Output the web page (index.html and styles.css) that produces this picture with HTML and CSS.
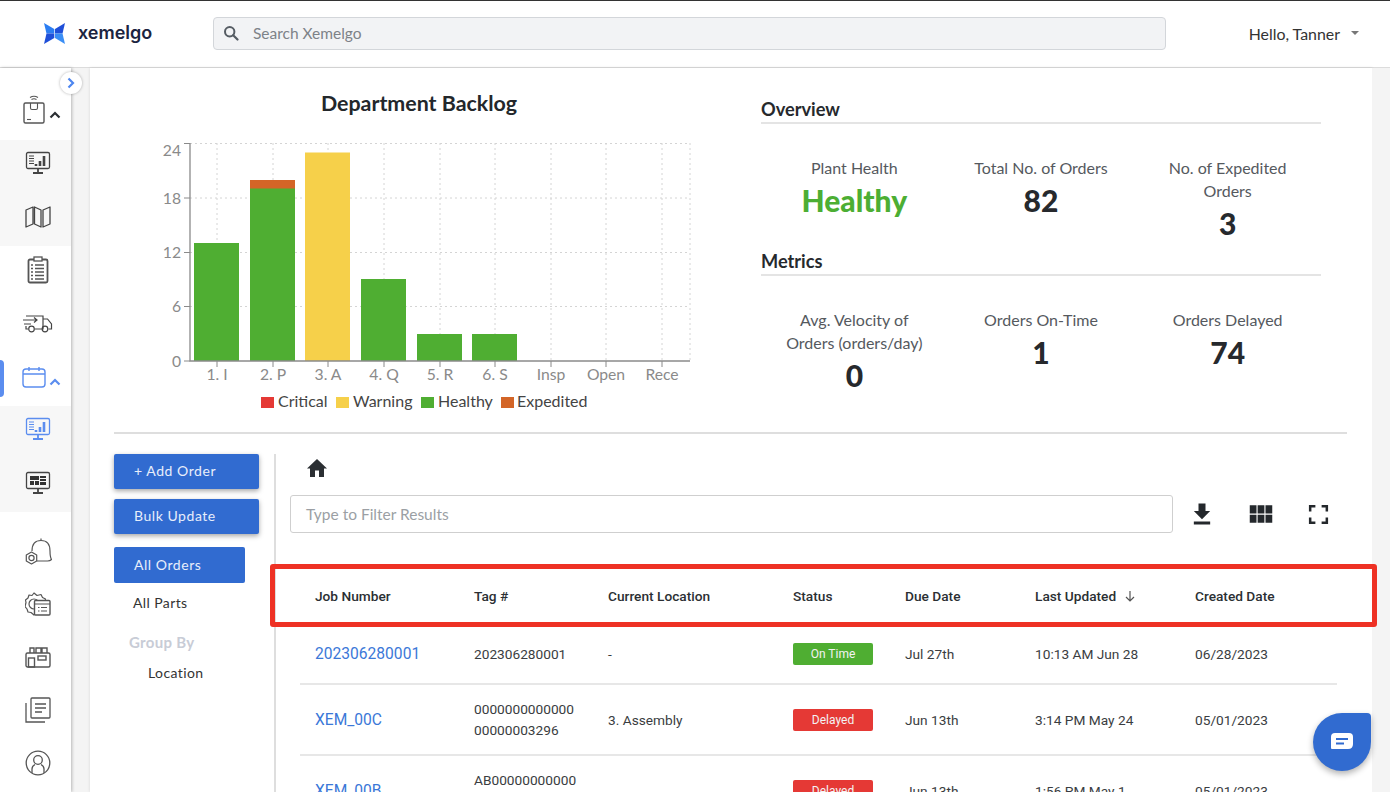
FILE: index.html
```html
<!DOCTYPE html>
<html lang="en">
<head>
<meta charset="utf-8">
<title>Xemelgo</title>
<link rel="stylesheet" href="styles.css">
</head>
<body>
<div class="app">
  <header class="topbar">
    <div class="logo">
      <svg class="logo-mark" viewBox="0 0 21 21" width="21" height="21"><path fill="#2b7df2" d="M0 0l10.300 6v4.500H2.500z"/><path fill="#1f4fd8" d="M2.500 10.500h7.800V15L0 21z"/><path fill="#1f4fd8" d="M21 0L11 6v4.500h7.500z"/><path fill="#3a8ef5" d="M18.500 10.500H11V15l10 6z"/></svg>
      <span class="logo-text">xemelgo</span>
    </div>
    <div class="search">
      <svg viewBox="0 0 16 16" width="16" height="16"><circle cx="6.7" cy="6.7" r="4.7" fill="none" stroke="#555c63" stroke-width="2"/><path d="M10.200 10.200l4.300 4.300" stroke="#555c63" stroke-width="2.200" stroke-linecap="round"/></svg>
      <span>Search Xemelgo</span>
    </div>
    <div class="user"><span>Hello, Tanner</span><i class="caret"></i></div>
  </header>

  <div class="body-row">
    <nav class="sidebar">
      <div class="nav-item first">
        <svg class="ico" viewBox="0 0 24 32" width="24" height="32" fill="none" stroke="#555" stroke-width="1.100"><path d="M8 3.500q4-2.500 8 0M9.500 5.500q2.500-1.500 5 0"/><rect x="2" y="9" width="20" height="20" rx="1.500" stroke-width="1.400"/><path d="M8.500 9v5q0 1.500 1.500 1.500h4q1.500 0 1.500-1.500V9"/><path d="M5 25.500h4"/></svg>
        <svg class="chev" viewBox="0 0 12 8" width="12" height="8"><path d="M1.500 6.500L6 2l4.500 4.500" fill="none" stroke="#2b2f33" stroke-width="2.200"/></svg>
      </div>
      <div class="nav-sub">
        <div class="nav-item">
          <svg viewBox="0 0 26 24" width="26" height="24" fill="none" stroke="#444" stroke-width="1.300"><rect x="1.500" y="1.500" width="23" height="16" rx="1.500"/><path d="M13 18v3M8 22h10" stroke-width="1.800"/><path d="M4 5h5M4 7.500h5M4 10h5M4 12.500h5" stroke-width="1"/><path d="M11 15v-2M15 15v-5M19 15V5" stroke-width="2.600"/></svg>
        </div>
        <div class="nav-item">
          <svg viewBox="0 0 26 22" width="26" height="22" fill="none" stroke="#444" stroke-width="1.300" stroke-linejoin="round"><path d="M1 4l7-3v17l-7 3zM9.500 1l6.500 3v17l-6.500-3zM18 4l7-3v17l-7 3z"/></svg>
        </div>
      </div>
      <div class="nav-mid">
        <div class="nav-item">
          <svg viewBox="0 0 22 28" width="22" height="28" fill="none" stroke="#555" stroke-width="1.300"><rect x="1.500" y="3.500" width="19" height="23" rx="1.500" stroke-width="1.800"/><rect x="7" y="1" width="8" height="4" fill="#fff"/><path d="M8 9h9M8 12.500h9M8 16h9M8 19.500h9M8 23h9M4 9h2M4 12.500h2M4 16h2M4 19.500h2M4 23h2"/></svg>
        </div>
        <div class="nav-item">
          <svg viewBox="0 0 30 20" width="30" height="20" fill="none" stroke="#444" stroke-width="1.200"><path d="M3 3h17v13H12M5 16H3v-3M20 6h4.500l4 5v5h-3M20 16h-1"/><circle cx="8.500" cy="16" r="2.800"/><circle cx="22" cy="16" r="2.800"/><path d="M0 7h14M11 4.500L14 7l-3 2.500M1 11h7"/></svg>
        </div>
        <div class="nav-item active">
          <i class="pill"></i>
          <svg class="ico" viewBox="0 0 24 22" width="24" height="22" fill="none" stroke="#5b8def" stroke-width="1.400"><rect x="1" y="3" width="22" height="18" rx="3"/><path d="M1 8h22M7 1v4M17 1v4"/></svg>
          <svg class="chev" viewBox="0 0 12 8" width="12" height="8"><path d="M1.500 6.500L6 2l4.500 4.500" fill="none" stroke="#5b8def" stroke-width="2.200"/></svg>
        </div>
      </div>
      <div class="nav-sub">
        <div class="nav-item">
          <svg viewBox="0 0 26 24" width="26" height="24" fill="none" stroke="#5b8def" stroke-width="1.300"><rect x="1.500" y="1.500" width="23" height="16" rx="1.500"/><path d="M13 18v3M8 22h10" stroke-width="1.800"/><path d="M4 5h5M4 7.500h5M4 10h5M4 12.500h5" stroke-width="1"/><path d="M11 15v-2M15 15v-5M19 15V5" stroke-width="2.600"/></svg>
        </div>
        <div class="nav-item">
          <svg viewBox="0 0 26 24" width="26" height="24" fill="none" stroke="#444" stroke-width="1.300"><rect x="1.500" y="1.500" width="23" height="16" rx="1.500"/><path d="M13 18v3M8 22h10" stroke-width="1.800"/><path fill="#333" stroke="none" d="M5 5h9v4H5zM15 5h6v2h-6zM15 8h6v2h-6zM5 10h4v4H5zM10 10h4v4h-4zM15 11h6v3h-6z"/></svg>
        </div>
      </div>
      <div class="nav-lower">
        <div class="nav-item">
          <svg viewBox="0 0 27 28" width="27" height="28" fill="none" stroke="#555" stroke-width="1.200" stroke-linejoin="round"><path d="M16 1.500v2"/><path d="M7 14q0-10.500 9-10.500T25 14q0 6 1.500 8.500-1.500 1.500-4 1.500H12"/><path d="M6.500 15l5.200 3v6l-5.200 3-5.200-3v-6z" fill="#fff"/><circle cx="6.500" cy="21" r="2.600"/></svg>
        </div>
        <div class="nav-item">
          <svg viewBox="0 0 26 24" width="26" height="24" fill="none" stroke="#555" stroke-width="1.200" stroke-linejoin="round"><path d="M9 1l3 2.500 4-1 1.500 3 3 1.500-1 4 1 3-1 3-3 1.500-1.500 3-4-1L9 23l-3-2.500-3-.500-1-3-2-2.500 1-4L.500 8 3 6l1-3 3 .500z"/><circle cx="9" cy="12" r="5"/><rect x="9.500" y="8.500" width="15.500" height="14.500" rx="1" fill="#fff" stroke-width="1.400"/><path d="M9.500 12h15.500M16 15.500h6M16 19h6M13 15.500h1.500M13 19h1.500"/></svg>
        </div>
        <div class="nav-item">
          <svg viewBox="0 0 26 22" width="26" height="22" fill="none" stroke="#555" stroke-width="1.400"><rect x="1" y="7" width="24" height="14" rx="1.500"/><path d="M5 7V2h4v5M11 7V2h5v5M17 7V2h5v5"/><rect x="3.500" y="12" width="6" height="9"/><rect x="13" y="10" width="8" height="4"/></svg>
        </div>
        <div class="nav-item">
          <svg viewBox="0 0 26 26" width="26" height="26" fill="none" stroke="#555" stroke-width="1.300"><rect x="6" y="1" width="19" height="20" rx="1"/><path d="M1 6v19h19M10 7h11M10 11h11M10 15h7"/></svg>
        </div>
        <div class="nav-item">
          <svg viewBox="0 0 26 26" width="26" height="26" fill="none" stroke="#555" stroke-width="1.300"><circle cx="13" cy="13" r="11.800"/><circle cx="13" cy="10" r="4.300"/><path d="M7 23v-4q0-3 3-4.500M19 23v-4q0-3-3-4.500"/></svg>
        </div>
      </div>
      <button class="collapse" type="button" aria-label="Expand"><svg viewBox="0 0 10 12" width="10" height="12"><path d="M2.500 1.500L7 6l-4.500 4.500" fill="none" stroke="#4d86f0" stroke-width="2.200"/></svg></button>
    </nav>

    <main class="content">
      <section class="top">
        <div class="chart-col">
          <h2 class="chart-title">Department Backlog</h2>
          <svg class="chart" viewBox="114 116 610 300" width="610" height="300">
            <g stroke="#d4d4d4" stroke-dasharray="2 3" fill="none">
              <path d="M190 143.500H690M190 198H690M190 252.500H690M190 306.500H690"/>
              <path d="M217 143V361M273 143V361M328 143V361M384 143V361M440 143V361M495 143V361M551 143V361M606 143V361M662 143V361M690 143V361"/>
            </g>
            <rect x="194" y="243" width="45" height="118" fill="#4fae32"/>
            <rect x="250" y="188" width="45" height="173" fill="#4fae32"/>
            <rect x="250" y="180" width="45" height="8.500" fill="#d36527"/>
            <rect x="305" y="152.500" width="45" height="208.500" fill="#f6d04a"/>
            <rect x="361" y="279" width="45" height="82" fill="#4fae32"/>
            <rect x="417" y="334" width="45" height="27" fill="#4fae32"/>
            <rect x="472" y="334" width="45" height="27" fill="#4fae32"/>
            <g stroke="#8a8a8a" fill="none">
              <path stroke-width="1.300" d="M190 143V361H690"/>
              <path d="M184 143.500H190M184 198H190M184 252.500H190M184 306.500H190M184 361H190M217 361v6M273 361v6M328 361v6M384 361v6M440 361v6M495 361v6M551 361v6M606 361v6M662 361v6"/>
            </g>
            <g class="y-labels" text-anchor="end">
              <text x="181" y="156">24</text><text x="181" y="204">18</text><text x="181" y="258">12</text><text x="181" y="312">6</text><text x="181" y="367">0</text>
            </g>
            <g class="x-labels" text-anchor="middle">
              <text x="217" y="380">1. I</text><text x="273" y="380">2. P</text><text x="328" y="380">3. A</text><text x="384" y="380">4. Q</text><text x="440" y="380">5. R</text><text x="495" y="380">6. S</text><text x="551" y="380">Insp</text><text x="606" y="380">Open</text><text x="662" y="380">Rece</text>
            </g>
            <g class="legend">
              <rect x="261" y="397" width="13" height="11" fill="#e53935"/><text x="278" y="407">Critical</text>
              <rect x="336" y="397" width="13" height="11" fill="#f6d04a"/><text x="353" y="407">Warning</text>
              <rect x="421" y="397" width="13" height="11" fill="#4fae32"/><text x="438" y="407">Healthy</text>
              <rect x="501" y="397" width="13" height="11" fill="#d36527"/><text x="517" y="407">Expedited</text>
            </g>
          </svg>
        </div>
        <div class="stats-col">
          <h3 class="section-head">Overview</h3>
          <div class="stats first-stats">
            <div class="stat"><div class="stat-label">Plant Health</div><div class="stat-value healthy">Healthy</div></div>
            <div class="stat"><div class="stat-label">Total No. of Orders</div><div class="stat-value">82</div></div>
            <div class="stat"><div class="stat-label">No. of Expedited<br>Orders</div><div class="stat-value">3</div></div>
          </div>
          <h3 class="section-head">Metrics</h3>
          <div class="stats">
            <div class="stat"><div class="stat-label">Avg. Velocity of<br>Orders (orders/day)</div><div class="stat-value">0</div></div>
            <div class="stat"><div class="stat-label">Orders On-Time</div><div class="stat-value">1</div></div>
            <div class="stat"><div class="stat-label">Orders Delayed</div><div class="stat-value">74</div></div>
          </div>
        </div>
      </section>

      <section class="lower">
        <aside class="filters">
          <button class="btn raised" type="button">+ Add Order</button>
          <button class="btn raised" type="button">Bulk Update</button>
          <button class="btn tab" type="button">All Orders</button>
          <div class="tab-link">All Parts</div>
          <div class="group-head">Group By</div>
          <div class="group-link">Location</div>
        </aside>
        <div class="orders">
          <svg class="home" viewBox="0 0 24 24" width="24" height="24"><path fill="#2b2f33" d="M10 21v-6.500h4V21h5v-8.500h3L12 3 2 12.500h3V21z"/></svg>
          <div class="toolbar">
            <div class="filter-input">Type to Filter Results</div>
            <div class="tools">
              <svg viewBox="0 0 24 24" width="28" height="28"><path fill="#24282c" d="M19 9.500h-4V3H9v6.500H5l7 7zM5 18.500V21h14v-2.500z"/></svg>
              <svg viewBox="0 0 24 24" width="30" height="30"><path fill="#24282c" d="M3 5h5.400v6.500H3zM9.300 5h5.400v6.500H9.300zM15.600 5H21v6.500h-5.400zM3 12.500h5.400V19H3zM9.300 12.500h5.400V19H9.300zM15.600 12.500H21V19h-5.400z"/></svg>
              <svg viewBox="0 0 24 24" width="25" height="25"><path fill="none" stroke="#24282c" stroke-width="2.400" d="M4 9V4h5M15 4h5v5M20 15v5h-5M9 20H4v-5"/></svg>
            </div>
          </div>
          <div class="table">
            <div class="row head">
              <div>Job Number</div><div>Tag #</div><div>Current Location</div><div>Status</div><div>Due Date</div>
              <div class="sorted">Last Updated <svg viewBox="0 0 12 12" width="12" height="12"><path d="M6 1v10M2 7l4 4 4-4" fill="none" stroke="#555" stroke-width="1.200"/></svg></div>
              <div>Created Date</div>
            </div>
            <div class="row r1">
              <a class="job">202306280001</a><div>202306280001</div><div>-</div><div><span class="tag ok">On Time</span></div><div>Jul 27th</div><div>10:13 AM Jun 28</div><div>06/28/2023</div>
            </div>
            <div class="row r2">
              <a class="job">XEM_00C</a><div>0000000000000<br>00000003296</div><div>3. Assembly</div><div><span class="tag late">Delayed</span></div><div>Jun 13th</div><div>3:14 PM May 24</div><div>05/01/2023</div>
            </div>
            <div class="row r2">
              <a class="job">XEM_00B</a><div>AB00000000000<br>00000003295</div><div>-</div><div><span class="tag late">Delayed</span></div><div>Jun 13th</div><div>1:56 PM May 1</div><div>05/01/2023</div>
            </div>
          </div>
        </div>
      </section>
    </main>
    <div class="gutter-right"></div>
  </div>

  <div class="highlight"></div>
  <button class="chat" type="button" aria-label="Chat"><svg viewBox="0 0 24 20" width="24" height="20"><path fill="#fff" d="M5 1h14q4 0 4 4v7q0 5-5 5H2q-1 0-1-1V5q0-4 4-4z"/><path d="M6 7h12M6 11.500h8" stroke="#316bd0" stroke-width="1.800"/></svg></button>
</div>
</body>
</html>
```

FILE: styles.css
```css
* { box-sizing: border-box; }
html, body { margin: 0; height: 100%; }
body {
  overflow: hidden;
  font-family: "Lato", "Liberation Sans", sans-serif;
  color: #2b2f33;
  background: #f4f4f4;
}
.app { position: relative; width: 1390px; height: 792px; overflow: hidden; display: flex; flex-direction: column; }

/* header */
.topbar {
  flex: none;
  height: 68px;
  display: flex;
  align-items: center;
  background: #fff;
  border-top: 1px solid #333;
  border-bottom: 1px solid #dcdcdc;
  padding: 0 31px 2px 44px;
}
.logo { display: flex; align-items: center; width: 169px; gap: 13px; }
.logo-mark { flex: none; }
.logo-text { font-family: "Inter", sans-serif; font-size: 18px; font-weight: 600; color: #1b2440; line-height: 1; }
.search {
  width: 953px;
  height: 33px;
  display: flex;
  align-items: center;
  gap: 14px;
  padding-left: 9px;
  background: #f2f3f5;
  border: 1px solid #d3d6da;
  border-radius: 4px;
  font-size: 15.500px;
  color: #7d8288;
}
.user { margin-left: auto; display: flex; align-items: center; gap: 11px; font-size: 15.900px; color: #333; }
.caret { width: 0; height: 0; border: 4.500px solid transparent; border-top-color: #777; border-bottom-width: 0; }

.body-row { flex: 1; display: flex; min-height: 0; }

/* sidebar */
.sidebar {
  position: relative;
  flex: none;
  width: 71px;
  margin-right: 19px;
  padding-top: 15px;
  background: #fff;
  box-shadow: 1px 0 3px rgba(0,0,0,.25);
}
.nav-item { position: relative; height: 53px; display: flex; align-items: center; justify-content: center; padding-left: 5px; }
.nav-item.first { height: 54px; margin-bottom: 3px; padding: 0 3px 0 0; }
.nav-item.first .chev, .nav-item.active .chev { position: absolute; left: 49px; top: 28px; }
.nav-sub { height: 106px; display: flex; flex-direction: column; gap: 8px; background: #f7f7f7; }
.nav-sub .nav-item { height: 46px; }
.nav-mid { margin-top: -3px; }
.nav-mid .nav-item { height: 53.500px; }
.nav-mid .active { margin-bottom: 2px; padding: 0 3px 0 0; }
.pill { position: absolute; left: 0; top: 9.500px; width: 4px; height: 37px; background: #5b8def; border-radius: 0 4px 4px 0; }
.nav-lower { margin-top: 12.500px; }
.collapse {
  position: absolute;
  top: 4px;
  left: 60px;
  width: 22px;
  height: 22px;
  padding: 0;
  display: flex;
  align-items: center;
  justify-content: center;
  background: #fff;
  border: 0;
  border-radius: 50%;
  box-shadow: 0 0 3px rgba(0,0,0,.3);
}

/* content */
.content { flex: none; width: 1282px; background: #fff; padding: 0 25px 0 24px; box-shadow: 0 0 3px rgba(0,0,0,.12); }
.gutter-right { flex: 1; background: #f4f4f4; }
.top { display: flex; height: 366px; border-bottom: 2px solid #dedede; }
.chart-col { flex: none; width: 610px; margin-right: 37px; }
.chart-title { margin: 23px 0 1px; text-align: center; font-size: 21.400px; line-height: 24px; font-weight: 700; color: #23272b; }
.chart { display: block; }
.chart text { font-family: "Lato", sans-serif; }
.y-labels, .x-labels { font-size: 15.700px; fill: #8a8a8a; }
.legend { font-size: 16px; fill: #444; }

.stats-col { flex: none; width: 560px; padding-top: 29px; }
.section-head { margin: 0; height: 27px; line-height: 24px; font-size: 18.200px; font-weight: 700; color: #26292d; border-bottom: 2px solid #e4e4e4; }
.stats { display: grid; grid-template-columns: repeat(3, 1fr); padding-top: 32px; text-align: center; }
.first-stats { height: 125px; }
.stat-label { font-size: 16px; line-height: 23px; color: #55595e; }
.stat-value { font-size: 30px; line-height: 42px; font-weight: 900; color: #26292d; }
.healthy { color: #4cae33; }

/* lower */
.lower { display: flex; height: 400px; padding-top: 20px; }
.filters { flex: none; width: 162px; border-right: 2px solid #dedede; font-size: 14px; }
.btn { display: block; font: inherit; color: #e8eefb; letter-spacing: .55px; border: 0; border-radius: 2px; background: #316bd0; text-align: left; padding: 0 0 2px 20px; }
.raised { width: 145px; height: 35px; margin-bottom: 10px; box-shadow: 0 2px 5px rgba(0,0,0,.35); }
.tab { width: 131px; height: 36px; margin-top: 13px; }
.tab-link { margin: 11px 0 0 19px; line-height: 18px; color: #333; letter-spacing: .4px; }
.group-head { margin: 21px 0 0 15px; line-height: 18px; color: #c8ccd6; font-size: 15px; font-weight: 700; letter-spacing: .3px; }
.group-link { margin: 13px 0 0 34px; line-height: 18px; color: #333; letter-spacing: .4px; }

.orders { flex: 1; min-width: 0; padding-left: 14px; font-family: "Roboto", sans-serif; }
.home { display: block; margin: 2px 0 0 15px; }
.toolbar { display: flex; align-items: center; margin-top: 15px; }
.filter-input { width: 883px; height: 38px; display: flex; align-items: center; padding-left: 15px; border: 1px solid #cfcfcf; border-radius: 3px; font-family: "Lato", sans-serif; font-size: 15.500px; color: #9b9fa4; }
.tools { display: flex; align-items: center; margin-left: 15px; gap: 30px; }
.table { margin: 35px 10px 0 10px; font-size: 13.700px; color: #3a3d41; }
.row { display: grid; grid-template-columns: 159px 134px 185px 112px 130px 160px 1fr; align-items: center; padding-left: 15px; border-bottom: 2px solid #e7e7e7; line-height: 21px; }
.head { height: 56px; border-bottom: 0; font-weight: 500; font-size: 13.700px; color: #2b2f33; }
.r1 { height: 61px; padding-top: 1px; }
.r2 { height: 71px; padding-top: 1px; }
.job { color: #3b78d8; font-size: 15.600px; }
.sorted svg { margin-left: 4px; vertical-align: -1px; }
.tag { display: block; width: 80px; height: 22px; border-radius: 2px; text-align: center; font-size: 12px; line-height: 22px; color: #f3f3f3; }
.ok { background: #4fae32; }
.late { background: #e53935; }

/* overlays */
.highlight { position: absolute; left: 270px; top: 564px; width: 1107px; height: 63px; border: 5px solid #ee3124; border-radius: 3px; pointer-events: none; }
.chat {
  position: absolute;
  left: 1313px;
  top: 713px;
  width: 58px;
  height: 58px;
  padding: 0;
  display: flex;
  align-items: center;
  justify-content: center;
  background: #316bd0;
  border: 0;
  border-radius: 50% 4px 50% 50%;
  box-shadow: 0 3px 6px rgba(0,0,0,.3);
}
```
